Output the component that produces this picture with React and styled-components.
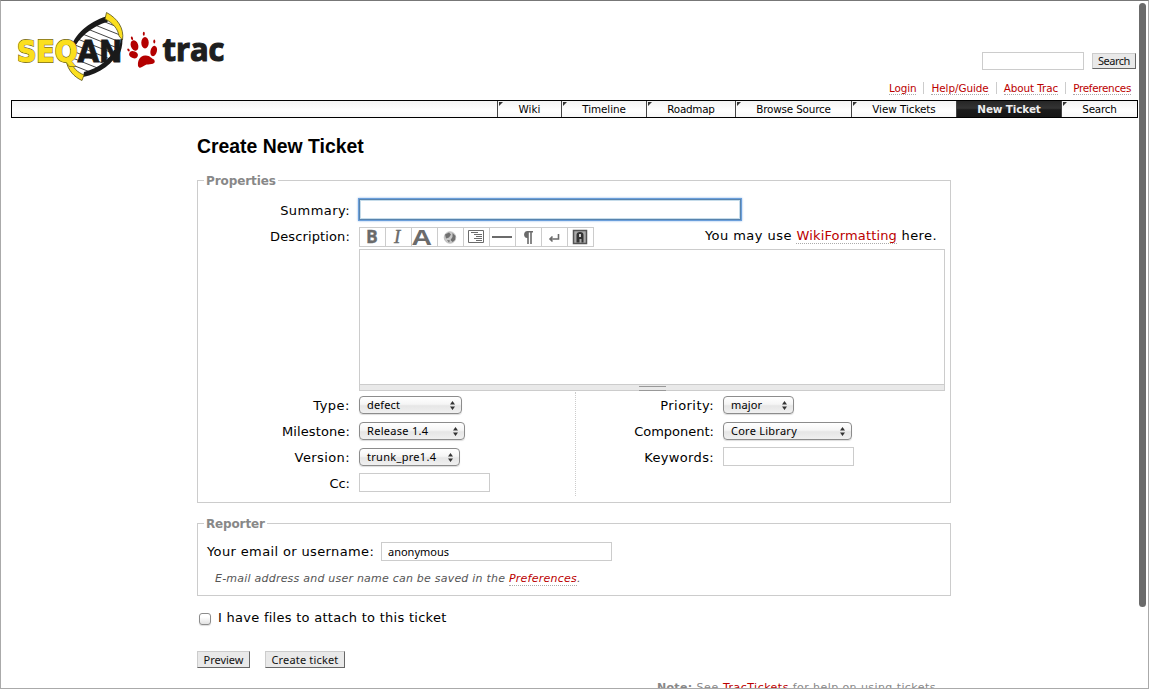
import React from "react";
import styled, { createGlobalStyle, css } from "styled-components";

const verdana = `"DejaVu Sans", Verdana, sans-serif`;
const lucida = `"Noto Sans", "Lucida Grande", sans-serif`;

const Global = createGlobalStyle`
  * { box-sizing: border-box; }
  body { margin: 0; background: #fff; color: #000; font-family: ${verdana}; font-size: 13px; }
`;

const Frame = styled.div`
  position: relative;
  width: 1149px;
  height: 689px;
  overflow: hidden;
  border: 1px solid #aaa;
  border-top-color: #777;
  background: #fff;
`;

const Scrollbar = styled.div`
  position: absolute;
  right: 2px;
  top: 2px;
  width: 7px;
  height: 604px;
  border-radius: 4px;
  background: #6b6b6b;
`;

const Header = styled.header`
  display: flex;
  justify-content: space-between;
  height: 99px;
  padding: 0 12px 0 16px;
`;

const HeaderTools = styled.div`
  display: flex;
  flex-direction: column;
  align-items: flex-end;
  padding-top: 51px;
`;

const SearchForm = styled.form`
  display: flex;
  align-items: center;
  gap: 8px;
`;

const Field = styled.input`
  display: block;
  width: ${(p) => p.$w}px;
  height: ${(p) => p.$h || 19}px;
  margin: ${(p) => p.$top || 0}px 0 0;
  padding: 0 6px 1px;
  border: 1px solid #ccc;
  border-radius: 0;
  outline: none;
  background: #fff;
  font: 11px ${lucida};
  ${(p) =>
    p.$focus &&
    css`
      border-color: #5883ad;
      box-shadow: 0 0 0 1px #6b9fdb, 0 0 2px 1px #8fb8e8, inset 0 0 0 1px #c6dcea;
    `}
`;

const Button = styled.button`
  display: flex;
  align-items: center;
  justify-content: center;
  width: ${(p) => p.$w}px;
  height: ${(p) => p.$h || 17}px;
  padding: 0;
  border: 1px solid #ccc;
  border-right-color: #666;
  border-bottom-color: #666;
  border-radius: 0;
  background: #e9e9e9;
  color: #111;
  font: 11px/14px ${lucida};
  white-space: nowrap;
`;

const MetaNav = styled.ul`
  display: flex;
  margin: 12px 5px 0 0;
  padding: 0;
  list-style: none;
`;

const MetaItem = styled.li`
  display: flex;
  align-items: flex-start;
  height: 13px;
  & + & { margin-left: 7px; }
  & + &::before { content: ""; width: 1px; height: 12px; margin-right: 7px; background: #ccc; }
`;

const Link = styled.a`
  color: #b00;
  text-decoration: none;
  border-bottom: 1px dotted #aaa;
  white-space: nowrap;
`;

const MetaLink = styled(Link)`
  height: 13px;
  font-size: 10.4px;
  line-height: 12px;
`;

const Tabs = styled.nav`
  display: flex;
  justify-content: flex-end;
  width: 1127px;
  height: 18px;
  margin-left: 10px;
  border: 1px solid #000;
  background: linear-gradient(#f3f3f3, #fff 60%, #f8f8f8);
`;

const Tab = styled.a`
  position: relative;
  width: ${(p) => p.$w}px;
  border-left: 1px solid #444;
  font-size: 10.4px;
  line-height: 17px;
  text-align: center;
  white-space: nowrap;
  ${(p) =>
    p.$active
      ? css`
          background: linear-gradient(#262626, #333 45%, #1b1b1b 55%, #161616);
          color: #eee;
          font-weight: bold;
        `
      : css`
          &::before {
            content: "";
            position: absolute;
            left: 1px;
            top: 1px;
            border-top: 4px solid #333;
            border-right: 4px solid transparent;
          }
        `}
`;

const Text = styled.span`
  letter-spacing: ${(p) => p.$ls || 0}px;
  white-space: pre;
`;

const Main = styled.main`
  width: 754px;
  margin-left: 196px;
`;

const Title = styled.h1`
  height: 62px;
  margin: 0;
  padding-top: 17px;
  font: bold 19.4px/22px "Liberation Sans", Arial, sans-serif;
`;

const Group = styled.section`
  position: relative;
  height: ${(p) => p.$h}px;
  padding-top: 18px;
  border: 1px solid #ccc;
  & + & { margin-top: 20px; }
`;

const Legend = styled.h2`
  position: absolute;
  left: 6px;
  top: -8px;
  margin: 0;
  padding: 0 2px;
  background: #fff;
  color: #888;
  font-size: 12px;
  line-height: 17px;
`;

const Row = styled.div`
  display: flex;
  height: ${(p) => p.$h || 26}px;
`;

const Label = styled.label`
  width: ${(p) => p.$w || 161}px;
  padding-right: 9px;
  line-height: ${(p) => p.$lh || 24}px;
  text-align: right;
  flex: none;
  white-space: nowrap;
`;

const EditorHead = styled.div`
  display: flex;
  justify-content: space-between;
  width: 586px;
  padding-right: 8px;
`;

const Toolbar = styled.div`
  display: flex;
  width: 235px;
  height: 20px;
  border: 1px solid #ccc;
`;

const Tool = styled.span`
  display: flex;
  width: 26px;
  height: 18px;
  & + & { border-left: 1px solid #ccc; }
  svg { display: block; width: 25px; height: 18px; overflow: visible; }
`;

const Hint = styled.span`
  line-height: 18px;
  white-space: nowrap;
`;

const TextArea = styled.div`
  width: 586px;
  height: 142px;
  margin-left: 161px;
  border: 1px solid #ccc;
  display: flex;
  flex-direction: column;
  justify-content: flex-end;
`;

const Grip = styled.div`
  display: flex;
  justify-content: center;
  height: 6px;
  border-top: 1px solid #ccc;
  background: #e9e9e9;
  &::after {
    content: "";
    width: 27px;
    height: 3px;
    margin-top: 1px;
    border-top: 1px solid #999;
    border-bottom: 1px solid #999;
  }
`;

const Columns = styled.div`
  display: flex;
  padding-top: 1px;
`;

const Column = styled.div`
  width: ${(p) => p.$w}px;
  height: 104px;
  padding-top: 2px;
  ${(p) => p.$divided && css`border-left: 1px dotted #ccc;`}
`;

const SelectBox = styled.div`
  display: flex;
  align-items: center;
  justify-content: space-between;
  width: ${(p) => p.$w}px;
  height: 18px;
  margin-top: 2px;
  padding: 0 6px 0 7px;
  border: 1px solid #8c8c8c;
  border-radius: 4px;
  background: linear-gradient(#fff, #f5f5f5 45%, #e6e6e6 55%, #f0f0f0);
  box-shadow: 0 1px 1px #ddd;
  font: 11px/16px ${lucida};
  svg { width: 5px; height: 9px; }
`;

const ReporterRow = styled.div`
  display: flex;
  justify-content: space-between;
  width: 414px;
  padding-left: 9px;
  line-height: 19px;
`;

const SaveHint = styled.p`
  margin: 11px 0 0 17px;
  color: #555;
  font-size: 11px;
  line-height: 14px;
  font-style: italic;
`;

const AttachRow = styled.div`
  display: flex;
  height: 55px;
  padding: 12px 0 0 2px;
  gap: 7px;
  line-height: 20px;
`;

const CheckBox = styled.span`
  width: 12px;
  height: 12px;
  margin-top: 5px;
  border: 1px solid #8c8c8c;
  border-radius: 3px;
  background: linear-gradient(#fff 30%, #e2e2e2);
  box-shadow: 0 1px 1px #ddd;
`;

const Actions = styled.div`
  display: flex;
  gap: 15px;
`;

const Note = styled.p`
  width: 290px;
  margin: 13px 0 0 460px;
  color: #888;
  font-size: 11px;
  line-height: 14px;
  white-space: nowrap;
`;

function Logo() {
  return (
    <svg width="210" height="90" viewBox="17 1 210 90" overflow="visible" aria-label="SeqAn trac">
      <defs>
        <clipPath id="helix">
          <path d="M106 17 C88 24 75 36 72 49 L67 62 L84 76 C101 71 114 59 119 43 L121 32 Z" />
        </clipPath>
      </defs>
      <path d="M106 17 C88 24 75 36 72 49 L67 62 L84 76 C101 71 114 59 119 43 L121 32 Z" fill="#fff" />
      <g clipPath="url(#helix)" stroke="#444" strokeWidth="1">
        {[0, 1, 2, 3, 4, 5, 6, 7, 8, 9, 10].map((i) => (
          <path key={i} d={`M60 ${4 + i * 7} L130 ${32 + i * 7}`} />
        ))}
      </g>
      <path d="M106 16.500 C89 22 74 34 70 50 L73.500 50 C78 38 91 27 108 21.500 Z" fill="#1a1a1a" />
      <path d="M84 72 C99 68 110 59 114 50 L119.500 50 C114 63 100 74 83 77 Z" fill="#1a1a1a" />
      <path d="M120.500 39 L122.500 39 C122.500 46 121 51 119 55 L116 53 C119 49 120.500 44 120.500 39 Z" fill="#1a1a1a" />
      <path d="M106.500 12.500 C117 18 124.500 28 122.500 40 L119 36 C118 29 113 23 105 19 Z" fill="#fbdf1e" stroke="#55501a" strokeWidth="0.8" />
      <path d="M66.500 62 C68 70 74 77 82 80.500 L84 75 C77 72 73 68 71 61 Z" fill="#fbdf1e" stroke="#55501a" strokeWidth="0.8" />
      <text x="17" y="61.500" fontFamily="DejaVu Sans" fontWeight="bold" fontSize="30" textLength="60.500" lengthAdjust="spacingAndGlyphs" fill="#fbdf1e" stroke="#6b6420" strokeWidth="1.800" paintOrder="stroke">SEQ</text>
      <text x="17" y="61.500" fontFamily="DejaVu Sans" fontWeight="bold" fontSize="30" textLength="60.500" lengthAdjust="spacingAndGlyphs" fill="#fbdf1e" stroke="#fbdf1e" strokeWidth="0.500" aria-hidden="true">SEQ</text>
      <text x="77.500" y="61.500" fontFamily="DejaVu Sans" fontWeight="bold" fontSize="30" textLength="45" lengthAdjust="spacingAndGlyphs" fill="#1a1a1a" stroke="#1a1a1a" strokeWidth="0.900">AN</text>
      <g fill="#b40000">
        <ellipse cx="134.500" cy="45.500" rx="3.700" ry="5.300" transform="rotate(-20 134.500 45.500)" />
        <ellipse cx="145" cy="42.800" rx="3.700" ry="5.700" />
        <ellipse cx="153.700" cy="51" rx="3.200" ry="5.300" transform="rotate(15 153.700 51)" />
        <ellipse cx="133.500" cy="54.700" rx="4.500" ry="3.400" transform="rotate(25 133.500 54.700)" />
        <ellipse cx="132" cy="38.300" rx="1" ry="1.800" transform="rotate(-20 132 38.300)" />
        <ellipse cx="143.800" cy="33.800" rx="1" ry="2" />
        <ellipse cx="154.300" cy="41.500" rx="1" ry="2" />
        <ellipse cx="128.500" cy="50" rx="1" ry="1.500" transform="rotate(-40 128.500 50)" />
        <path d="M138 66 C137.500 60 140 56 145 55.500 C150 55 151 58.500 154 59.500 C157 64 150.500 64.500 146.500 64.500 C142.500 66 140 70 138 66 Z" />
      </g>
      <text x="162.500" y="61" fontFamily="Open Sans" fontWeight="bold" fontSize="32" textLength="62" lengthAdjust="spacingAndGlyphs" fill="#1e1e1e" stroke="#1e1e1e" strokeWidth="1.200">trac</text>
    </svg>
  );
}

const ink = "#6b6b6b";
const icons = [
  <svg viewBox="0 0 25 18"><text x="6" y="15" fontFamily="Open Sans" fontWeight="bold" fontSize="17.500" fill={ink} stroke={ink} strokeWidth=".3">B</text></svg>,
  <svg viewBox="0 0 25 18"><text x="8" y="15" fontFamily="Liberation Serif" fontStyle="italic" fontSize="19" fill={ink} stroke={ink} strokeWidth=".4">I</text></svg>,
  <svg viewBox="0 0 25 18"><text x="-.5" y="16.500" fontFamily="Liberation Sans" fontWeight="bold" fontSize="22" textLength="20.500" lengthAdjust="spacingAndGlyphs" fill={ink}>A</text></svg>,
  <svg viewBox="0 0 25 18"><circle cx="12" cy="9.500" r="5.800" fill="#c8c8c8" stroke="#aaa" strokeWidth=".6" /><path d="M7 6.500 l4-2 2 2 -2 3 -3 1z M14.500 5 l3 3 -.5 4 -2.500 2 -2-2 2-3z M9 12 l3 .5 -1 2z" fill="#707070" /></svg>,
  <svg viewBox="0 0 25 18"><path d="M4.500 2.500h15v12h-15z M7 4.500h7 M10 6.500h8 M12 8.500h6 M10 10.500h8 M12 12.500h6" fill="none" stroke={ink} /></svg>,
  <svg viewBox="0 0 25 18"><path d="M2 9h20" stroke={ink} strokeWidth="2" /></svg>,
  <svg viewBox="0 0 25 18"><path d="M17 3v1.500h-1.200V16h-1.600V4.500h-1.400V16h-1.600V10C7 10 7 3 11.500 3z" fill={ink} /></svg>,
  <svg viewBox="0 0 25 18"><path d="M16.500 6v5H8 M10.500 8.500l-2.500 2.500 2.500 2.500" fill="none" stroke={ink} strokeWidth="1.600" /></svg>,
  <svg viewBox="0 0 25 18"><path d="M5.500 2.500h13v13h-13z" fill="#aaa" stroke="#555" strokeWidth="1.500" /><path d="M8.500 14.500V7q0-3 3.500-3t3.500 3v7.500h-2v-3.500h-2v3.500z" fill="#333" /><path d="M11 6h2v3h-2z" fill="#ccc" /></svg>,
];

function Select({ w, ls, children }) {
  return (
    <SelectBox $w={w}>
      <Text $ls={ls}>{children}</Text>
      <svg viewBox="0 0 5 9"><path d="M2.500 0L5 3.500H0z M2.500 9L0 5.500h5z" fill="#333" /></svg>
    </SelectBox>
  );
}

const metaItems = [["Login", -0.1], ["Help/Guide", -0.05], ["About Trac", -0.07], ["Preferences", -0.3]];
const tabs = [
  ["Wiki", 64, 0], ["Timeline", 85, -0.08], ["Roadmap", 89, -0.25], ["Browse Source", 116, -0.17],
  ["View Tickets", 105, -0.06], ["New Ticket", 105, -0.1], ["Search", 76, -0.2],
];

export default function App() {
  return (
    <>
      <Global />
      <Frame>
        <Header>
          <Logo />
          <HeaderTools>
            <SearchForm>
              <Field $w={102} $h={18} aria-label="Search" />
              <Button $w={44} $h={16} type="button"><Text $ls={-0.5}>Search</Text></Button>
            </SearchForm>
            <MetaNav>
              {metaItems.map(([t, ls]) => (
                <MetaItem key={t}><MetaLink><Text $ls={ls}>{t}</Text></MetaLink></MetaItem>
              ))}
            </MetaNav>
          </HeaderTools>
        </Header>
        <Tabs>
          {tabs.map(([t, w, ls]) => (
            <Tab key={t} $w={w} $active={t === "New Ticket"}><Text $ls={ls}>{t}</Text></Tab>
          ))}
        </Tabs>
        <Main>
          <Title>Create New Ticket</Title>
          <Group $h={323}>
            <Legend><Text $ls={-0.1}>Properties</Text></Legend>
            <Row $h={28}>
              <Label><Text $ls={0.45}>Summary:</Text></Label>
              <Field $w={382} $h={21} $focus aria-label="Summary" />
            </Row>
            <Row $h={22}>
              <Label $lh={20}><Text $ls={0.13}>Description:</Text></Label>
              <EditorHead>
                <Toolbar>{icons.map((icon, i) => <Tool key={i}>{icon}</Tool>)}</Toolbar>
                <Hint><Text $ls={0.45}>You may use </Text><Link><Text $ls={0.16}>WikiFormatting</Text></Link><Text $ls={0.4}> here.</Text></Hint>
              </EditorHead>
            </Row>
            <TextArea><Grip /></TextArea>
            <Columns>
              <Column $w={377}>
                <Row><Label><Text $ls={0.5}>Type:</Text></Label><Select w={103} ls={0.15}>defect</Select></Row>
                <Row><Label><Text $ls={0.12}>Milestone:</Text></Label><Select w={106} ls={0.3}>Release 1.4</Select></Row>
                <Row><Label><Text $ls={0.4}>Version:</Text></Label><Select w={101} ls={0.3}>trunk_pre1.4</Select></Row>
                <Row><Label><Text>Cc:</Text></Label><Field $w={131} $top={1} aria-label="Cc" /></Row>
              </Column>
              <Column $w={375} $divided>
                <Row><Label $w={147}><Text $ls={0.45}>Priority:</Text></Label><Select w={71} ls={0.15}>major</Select></Row>
                <Row><Label $w={147}><Text>Component:</Text></Label><Select w={129} ls={0.25}>Core Library</Select></Row>
                <Row><Label $w={147}><Text $ls={0.35}>Keywords:</Text></Label><Field $w={131} $top={1} aria-label="Keywords" /></Row>
              </Column>
            </Columns>
          </Group>
          <Group $h={73}>
            <Legend><Text $ls={-0.15}>Reporter</Text></Legend>
            <ReporterRow>
              <Text $ls={0.37}>Your email or username:</Text>
              <Field $w={231} defaultValue="anonymous" aria-label="Your email or username" />
            </ReporterRow>
            <SaveHint><Text $ls={0.22}>E-mail address and user name can be saved in the </Text><Link><Text $ls={0.24}>Preferences</Text></Link>.</SaveHint>
          </Group>
          <AttachRow><CheckBox /><Text $ls={0.27}>I have files to attach to this ticket</Text></AttachRow>
          <Actions>
            <Button $w={53}><Text>Preview</Text></Button>
            <Button $w={80}><Text $ls={0.17}>Create ticket</Text></Button>
          </Actions>
          <Note><b><Text $ls={0.3}>Note:</Text></b><Text $ls={0.6}> See </Text><Link><Text $ls={0.48}>TracTickets</Text></Link><Text $ls={0.42}> for help on using tickets.</Text></Note>
        </Main>
        <Scrollbar />
      </Frame>
    </>
  );
}
